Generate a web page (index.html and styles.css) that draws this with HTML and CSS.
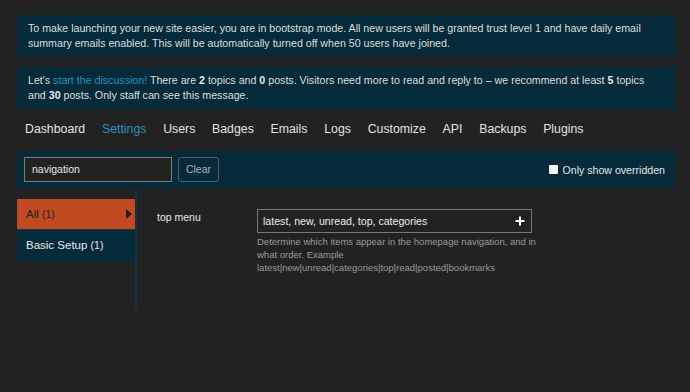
FILE: index.html
```html
<!DOCTYPE html>
<html>
<head>
<meta charset="utf-8">
<link rel="stylesheet" href="styles.css">
</head>
<body>
<div class="page">
  <div class="banner">To make launching your new site easier, you are in bootstrap mode. All new users will be granted trust level 1 and have daily email summary emails enabled. This will be automatically turned off when 50 users have joined.</div>
  <div class="banner banner-2">Let's <a class="link" href="#">start the discussion!</a> There are <b>2</b> topics and <b>0</b> posts. Visitors need more to read and reply to – we recommend at least <b>5</b> topics and <b>30</b> posts. Only staff can see this message.</div>
  <nav class="nav">
    <span class="nav-item">Dashboard</span>
    <span class="nav-item active">Settings</span>
    <span class="nav-item">Users</span>
    <span class="nav-item">Badges</span>
    <span class="nav-item">Emails</span>
    <span class="nav-item">Logs</span>
    <span class="nav-item">Customize</span>
    <span class="nav-item">API</span>
    <span class="nav-item">Backups</span>
    <span class="nav-item">Plugins</span>
  </nav>
  <div class="filter-bar">
    <div class="filter-left">
      <div class="search">navigation</div>
      <div class="btn-clear">Clear</div>
    </div>
    <label class="overridden"><span class="checkbox"></span>Only show overridden</label>
  </div>
  <div class="content">
    <div class="sidebar">
      <div class="cat active">All <span class="count">(1)</span><span class="arrow"></span></div>
      <div class="cat">Basic Setup <span class="count">(1)</span></div>
    </div>
    <div class="main">
      <div class="setting">
        <div class="setting-label">top menu</div>
        <div class="setting-value">
          <div class="list-input">
            <span>latest, new, unread, top, categories</span>
            <svg class="plus" width="10" height="10" viewBox="0 0 10 10"><path d="M5 0.5v9M0.5 5h9" stroke="#fff" stroke-width="2"/></svg>
          </div>
          <div class="desc">Determine which items appear in the homepage navigation, and in what order. Example latest|new|unread|categories|top|read|posted|bookmarks</div>
        </div>
      </div>
    </div>
  </div>
</div>
</body>
</html>
```

FILE: styles.css
```css
* { box-sizing: border-box; }
html, body { margin: 0; padding: 0; background: #222222; }
body {
  font-family: "Liberation Sans", Arial, sans-serif;
  color: #dddddd;
  height: 392px;
  overflow: hidden;
}
.page {
  padding: 15px 15px 0 17px;
}
.banner {
  background: #052b3a;
  color: #dedede;
  font-size: 10.65px;
  line-height: 15px;
  padding: 6px 22px 5px 11px;
}
.banner-2 {
  margin-top: 11px;
  padding-bottom: 6px;
}
.banner b { font-weight: bold; color: #e8e8e8; }
.link { color: #2a8fc0; text-decoration: none; }
.nav {
  display: flex;
  padding: 12px 0 0 0;
  height: 42px;
}
.nav-item {
  font-size: 12.3px;
  line-height: 16px;
  padding: 0 8.4px;
  color: #e2e2e2;
}
.nav-item:first-child { padding-left: 8px; }
.nav-item.active { color: #2b8fc4; }
.filter-bar {
  background: #052b3a;
  height: 37px;
  display: flex;
  align-items: center;
  justify-content: space-between;
  padding: 0 10px 0 7px;
}
.filter-left { display: flex; align-items: center; gap: 6px; }
.search {
  width: 148px;
  height: 25px;
  background: #222222;
  border: 1px solid #7a7a7a;
  font-size: 10.5px;
  line-height: 23px;
  padding: 0 7px;
  color: #e6e6e6;
}
.btn-clear {
  width: 41px;
  height: 25px;
  border: 1px solid #4f6066;
  border-radius: 3px;
  font-size: 10.5px;
  line-height: 23px;
  text-align: center;
  color: #a9b1b4;
}
.overridden {
  display: flex;
  align-items: center;
  font-size: 10.6px;
  color: #e6e6e6;
}
.checkbox {
  width: 9px;
  height: 9px;
  background: #f4f4f4;
  border-radius: 1px;
  margin-right: 5px;
}
.content {
  display: flex;
}
.sidebar {
  width: 120px;
  height: 122px;
  border-right: 2px solid #0e3543;
  padding-top: 11px;
}
.cat {
  position: relative;
  height: 31px;
  font-size: 11.5px;
  line-height: 31px;
  padding-left: 9px;
  background: #052b3a;
  color: #e8e8e8;
}
.cat.active {
  background: #c24a23;
  color: #1e1e1e;
  border-bottom: 1px solid #183a46;
}
.count { font-size: 10.5px; }
.arrow {
  position: absolute;
  right: 3px;
  top: 10px;
  width: 0;
  height: 0;
  border-top: 5px solid transparent;
  border-bottom: 5px solid transparent;
  border-left: 6px solid #1e1e1e;
}
.main {
  padding: 21px 0 0 20px;
}
.setting { display: flex; }
.setting-label {
  width: 100px;
  font-size: 10.5px;
  line-height: 14px;
  padding-top: 1px;
  color: #e8e8e8;
}
.setting-value { width: 275px; }
.list-input {
  height: 24px;
  border: 1px solid #777777;
  display: flex;
  align-items: center;
  justify-content: space-between;
  padding: 0 6px 0 5px;
  font-size: 10.6px;
  color: #ececec;
}
.plus { display: block; }
.desc {
  margin-top: 2px;
  margin-right: -14px;
  font-size: 9.5px;
  line-height: 13px;
  color: #9a9a9a;
}
```
